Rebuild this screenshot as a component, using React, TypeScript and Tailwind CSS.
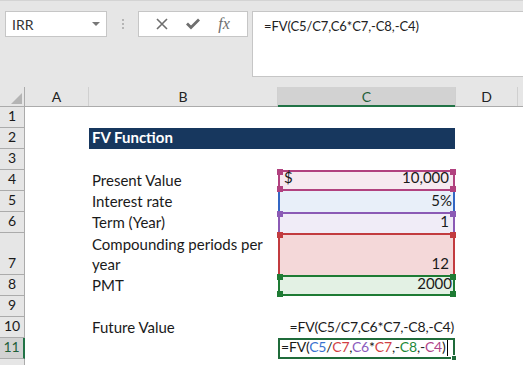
import React from "react";

const font = { fontFamily: "Lato, 'Open Sans', sans-serif" };

const ROWS: { n: number; h: string; label?: string }[] = [
  { n: 1, h: "h-[21px]" },
  { n: 2, h: "h-[21px]" },
  { n: 3, h: "h-[21px]" },
  { n: 4, h: "h-[21px]", label: "Present Value" },
  { n: 5, h: "h-[21px]", label: "Interest rate" },
  { n: 6, h: "h-[21px]", label: "Term (Year)" },
  { n: 7, h: "h-[42px]", label: "Compounding periods per year" },
  { n: 8, h: "h-[21px]", label: "PMT" },
  { n: 9, h: "h-[21px]" },
  { n: 10, h: "h-[21px]", label: "Future Value" },
  { n: 11, h: "h-[21px]" },
  { n: 12, h: "h-[21px]" },
];

// little square handle drawn on a range border corner
function Handle({ pos, color }: { pos: string; color: string }) {
  return <span className={`absolute w-[6px] h-[6px] ${pos} ${color}`} />;
}

function CCell({ n }: { n: number }) {
  if (n === 4)
    return (
      <div className="relative h-full bg-[#f6e9f0] border-2 border-[#b1417f] flex items-end justify-between px-[4px] pb-[1px]">
        <span>$</span>
        <span>10,000</span>
        <Handle pos="-left-[3px] -top-[3px]" color="bg-[#b1417f]" />
        <Handle pos="-right-[3px] -top-[3px]" color="bg-[#b1417f]" />
        <Handle pos="-left-[3px] -bottom-[3px] z-10" color="bg-[#b1417f]" />
        <Handle pos="-right-[3px] -bottom-[3px] z-10" color="bg-[#b1417f]" />
      </div>
    );
  if (n === 5)
    return (
      <div className="h-full bg-[#e8eff9] border-x-2 border-[#3366c4] flex items-end justify-end pr-[1px] pb-[1px]">
        5%
      </div>
    );
  if (n === 6)
    return (
      <div className="relative h-full bg-[#f0ecf7] border-x-2 border-t-2 border-[#8b5ab5] flex items-end justify-end pr-[4px] pb-[1px]">
        1
        <Handle pos="-left-[3px] -top-[3px]" color="bg-[#8b5ab5]" />
        <Handle pos="-right-[3px] -top-[3px]" color="bg-[#8b5ab5]" />
      </div>
    );
  if (n === 7)
    return (
      <div className="relative h-full bg-[#f4d8d9] border-x-2 border-t-2 border-[#c23b3f] flex items-end justify-end pr-[4px] pb-[1px]">
        12
        <Handle pos="-left-[3px] -top-[3px]" color="bg-[#c23b3f]" />
        <Handle pos="-right-[3px] -top-[3px]" color="bg-[#c23b3f]" />
      </div>
    );
  if (n === 8)
    return (
      <div className="relative h-full bg-[#e3f1e4] border-2 border-[#1e7b34] flex items-end justify-end pr-[1px]">
        2000
        <Handle pos="-left-[3px] -top-[3px]" color="bg-[#1e7b34]" />
        <Handle pos="-right-[3px] -top-[3px]" color="bg-[#1e7b34]" />
        <Handle pos="-left-[3px] -bottom-[3px]" color="bg-[#1e7b34]" />
        <Handle pos="-right-[3px] -bottom-[3px]" color="bg-[#1e7b34]" />
      </div>
    );
  if (n === 10)
    return (
      <div className="h-full flex items-end justify-end pr-[1px] pb-[1px] whitespace-nowrap text-[14px] tracking-[-0.2px]">
        =FV(C5/C7,C6*C7,-C8,-C4)
      </div>
    );
  if (n === 11)
    return (
      <div className="relative h-full border-2 border-[#1f6b3a] flex items-end pl-[1px] whitespace-nowrap text-[14px] tracking-[-0.2px]">
        <span>
          =FV(<span className="text-[#3a73d0]">C5</span>/<span className="text-[#d23f44]">C7</span>,
          <span className="text-[#8c5bbd]">C6</span>*<span className="text-[#d23f44]">C7</span>,-
          <span className="text-[#1d8a3a]">C8</span>,-<span className="text-[#b0458a]">C4</span>)
        </span>
        <span className="w-px h-[16px] bg-black ml-[1px] mb-[1px]" />
        <Handle pos="-right-[4px] -bottom-[4px]" color="bg-[#1f6b3a] border border-white" />
      </div>
    );
  return null;
}

export default function App() {
  return (
    <div className="w-[523px] h-[365px] overflow-hidden bg-white text-[#1a1a1a]" style={font}>
      {/* toolbar */}
      <div className="h-[87px] bg-[#e6e6e6] border-t border-[#d4d4d4] flex items-start pt-[10px] pl-[5px]">
        <div className="w-[102px] h-[26px] bg-white border border-[#c6c6c6] flex items-center justify-between pl-[6px] pr-[6px] text-[14px] text-[#333]">
          <span>IRR</span>
          <span className="w-0 h-0 border-x-[4px] border-x-transparent border-t-[4px] border-t-[#777]" />
        </div>
        <div className="w-[31px] flex flex-col items-center gap-[2px] pt-[8px]">
          <span className="w-[2px] h-[2px] bg-[#b5b5b5]" />
          <span className="w-[2px] h-[2px] bg-[#b5b5b5]" />
          <span className="w-[2px] h-[2px] bg-[#b5b5b5]" />
        </div>
        <div className="w-[110px] h-[26px] bg-white border border-[#c6c6c6] flex items-center justify-around px-[8px]">
          <svg width="12" height="12" viewBox="0 0 12 12">
            <path d="M1 1 L11 11 M11 1 L1 11" stroke="#6e6e6e" strokeWidth="1.6" fill="none" />
          </svg>
          <svg width="14" height="12" viewBox="0 0 14 12">
            <path d="M1 5.5 L5 9.5 L13 1.5" stroke="#6e6e6e" strokeWidth="2.8" fill="none" />
          </svg>
          <span className="italic text-[16px] leading-none font-['Liberation_Serif',serif] text-[#6e6e6e]">fx</span>
        </div>
        <div className="ml-[4px] flex-1 h-[66px] bg-white border border-[#c6c6c6] border-r-0 pl-[11px] pt-[5px] text-[13px] text-[#222] tracking-[-0.1px]">
          =FV(C5/C7,C6*C7,-C8,-C4)
        </div>
      </div>

      {/* column headers */}
      <div className="flex h-[20px] bg-[#e6e6e6] border-b border-[#ababab] text-[14px] text-[#222]">
        <div className="w-[25px] border-r border-[#ababab] flex items-end justify-end pr-[2px] pb-[2px]">
          <span className="w-0 h-0 border-l-[11px] border-l-transparent border-b-[11px] border-b-[#b4b4b4]" />
        </div>
        <div className="w-[64px] border-r border-[#d0d0d0] flex items-center justify-center">A</div>
        <div className="w-[189px] border-r border-[#d0d0d0] flex items-center justify-center">B</div>
        <div className="w-[177px] bg-[#d2d2d2] border-b-2 border-[#217346] -mb-px flex items-center justify-center text-[#1f5f3a]">
          C
        </div>
        <div className="w-[63px] border-x border-[#d0d0d0] flex items-center justify-center">D</div>
        <div className="flex-1" />
      </div>

      {/* rows */}
      <div className="text-[15px]">
        {ROWS.map((r) => (
          <div key={r.n} className={`flex ${r.h}`}>
            <div
              className={`w-[25px] shrink-0 flex items-end justify-center pb-[1px] text-[14px] border-b ${
                r.n === 11
                  ? "bg-[#d2d2d2] border-r-2 border-r-[#217346] border-b-[#ababab] text-[#1f5f3a]"
                  : "bg-[#e6e6e6] border-r border-r-[#ababab] border-b-[#ababab]"
              }`}
            >
              {r.n < 12 ? r.n : null}
            </div>
            <div className="w-[64px] shrink-0" />
            <div className="w-[189px] shrink-0 h-full">
              {r.n === 2 ? (
                <div className="h-full bg-[#17375e] text-white font-bold flex items-end pl-[3px] pb-[1px]">FV Function</div>
              ) : r.label ? (
                <div className="h-full flex items-end pl-[3px] pb-[1px] leading-[20px]">
                  <span className="w-[176px]">{r.label}</span>
                </div>
              ) : null}
            </div>
            <div className={`w-[177px] shrink-0 h-full ${r.n === 2 ? "bg-[#17375e]" : ""}`}>
              <CCell n={r.n} />
            </div>
            <div className="flex-1" />
          </div>
        ))}
      </div>
    </div>
  );
}
